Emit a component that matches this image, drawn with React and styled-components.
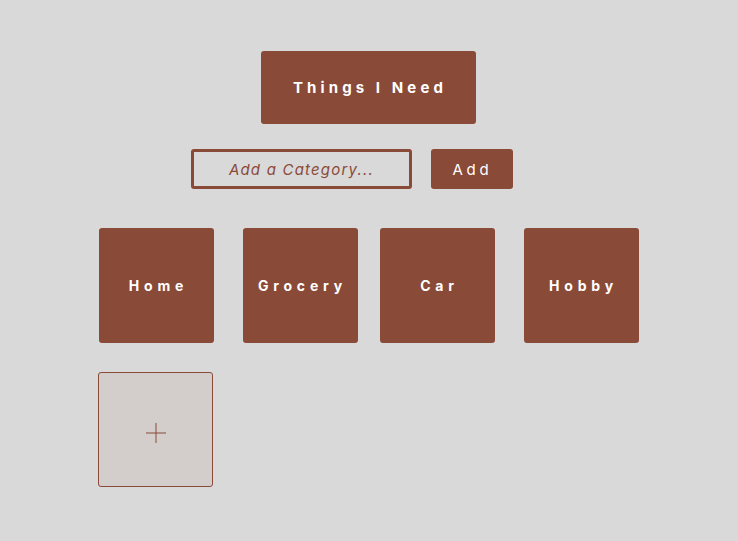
import React from "react";
import styled, { createGlobalStyle } from "styled-components";

const Global = createGlobalStyle`
  html, body { margin: 0; padding: 0; background: #d9d9d9; }
  body { font-family: Inter, "Noto Sans", sans-serif; }
`;

const brown = "#8a4a38";

const Page = styled.div`
  display: flex;
  flex-direction: column;
  align-items: center;
  padding-top: 51px;
  width: 738px;
  min-height: 541px;
  box-sizing: border-box;
`;

const Title = styled.h1`
  margin: 0 0 0 -2px;
  width: 215px;
  height: 73px;
  box-sizing: border-box;
  background: ${brown};
  border-radius: 3px;
  color: #fff;
  display: flex;
  align-items: center;
  justify-content: center;
  font-size: 15px;
  font-weight: 700;
  letter-spacing: 4.1px;
  padding-left: 4px;
`;

const Form = styled.form`
  display: flex;
  gap: 19px;
  margin-top: 25px;
  padding-right: 34px;
`;

const Input = styled.input`
  width: 221px;
  height: 40px;
  box-sizing: border-box;
  border: 3px solid ${brown};
  border-radius: 3px;
  background: transparent;
  font-family: Inter, sans-serif;
  font-style: italic;
  font-size: 15px;
  letter-spacing: 1.2px;
  text-align: center;
  color: ${brown};
  outline: none;
  &::placeholder { color: ${brown}; opacity: 1; }
`;

const AddButton = styled.button`
  width: 82px;
  height: 40px;
  border: none;
  border-radius: 3px;
  background: ${brown};
  color: #fff;
  font-family: Inter, sans-serif;
  font-size: 15px;
  letter-spacing: 3.8px;
  padding-left: 7px;
`;

const Column = styled.div`
  display: flex;
  flex-direction: column;
  margin-top: 39px;
`;

const Row = styled.div`
  display: flex;
  width: 540px;
`;

const Card = styled.div`
  width: 115px;
  height: 115px;
  box-sizing: border-box;
  margin-left: ${(p) => p.$gap || 0}px;
  background: ${brown};
  border-radius: 3px;
  color: #fff;
  display: flex;
  align-items: center;
  justify-content: center;
  font-size: 14px;
  font-weight: 700;
  letter-spacing: 4.8px;
  padding-left: 4px;
`;

const AddCard = styled.button`
  width: 115px;
  height: 115px;
  margin-top: 29px;
  margin-left: -1px;
  border: 1px solid ${brown};
  border-radius: 3px;
  background: #d3cdcb;
  display: flex;
  align-items: center;
  justify-content: center;
  padding: 6px 0 0 0;
`;

const cats = [
  { name: "Home", gap: 0 },
  { name: "Grocery", gap: 29 },
  { name: "Car", gap: 22 },
  { name: "Hobby", gap: 29 },
];

export default function App() {
  return (
    <>
      <Global />
      <Page>
        <Title>Things I Need</Title>
        <Form onSubmit={(e) => e.preventDefault()}>
          <Input placeholder="Add a Category..." />
          <AddButton type="submit">Add</AddButton>
        </Form>
        <Column>
          <Row>
            {cats.map((c) => (
              <Card key={c.name} $gap={c.gap}>{c.name}</Card>
            ))}
          </Row>
          <AddCard aria-label="add">
            <svg width="22" height="22" viewBox="0 0 22 22">
              <path d="M11 1v20M1 11h20" stroke={brown} strokeWidth="1" fill="none" />
            </svg>
          </AddCard>
        </Column>
      </Page>
    </>
  );
}
